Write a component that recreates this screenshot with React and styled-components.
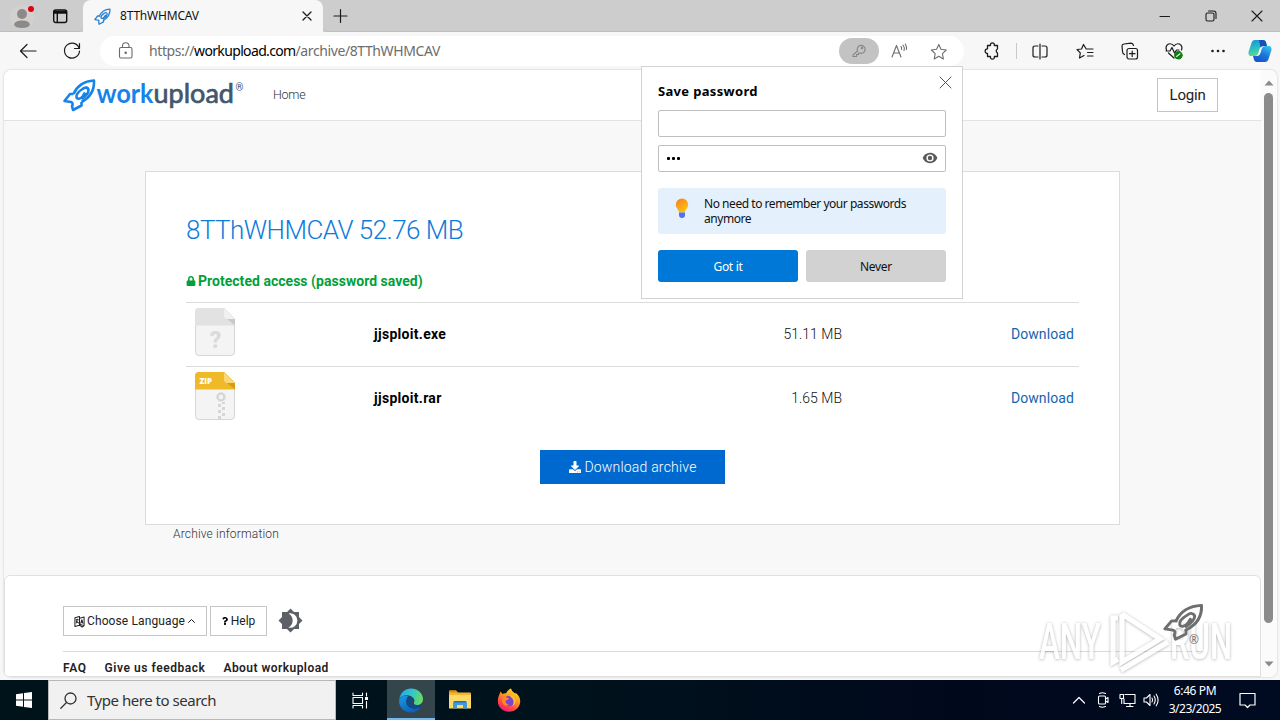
import React from "react";
import styled, { createGlobalStyle } from "styled-components";
import { FaLock, FaDownload, FaQuestion } from "react-icons/fa";

const GlobalStyle = createGlobalStyle`
  * { box-sizing: border-box; }
  html, body { margin: 0; padding: 0; }
  body { width: 1280px; height: 720px; overflow: hidden; }
  button { font: inherit; color: inherit; margin: 0; padding: 0; border: 0; background: none; }
  svg { display: block; flex: none; overflow: visible; }
`;

const ui = `"Noto Sans", "Open Sans", sans-serif`;
const web = `Roboto, "Liberation Sans", sans-serif`;

const Screen = styled.div`
  position: relative;
  display: flex;
  flex-direction: column;
  width: 1280px;
  height: 720px;
  background: #f7f7f7;
  font-family: ${ui};
  overflow: hidden;
`;

const Label = styled.span`
  font-size: ${(p) => p.$size || 12}px;
  font-weight: ${(p) => p.$weight || 400};
  letter-spacing: ${(p) => p.$track || 0}px;
  color: ${(p) => p.$color || "#111"};
  line-height: ${(p) => p.$line || "16px"};
  white-space: nowrap;
`;

/* ---------- window chrome ---------- */

const TabStrip = styled.div`
  display: flex;
  height: 32px;
  flex: none;
  background: #cdcdcd;
`;

const StripTools = styled.div`
  display: flex;
  align-items: center;
  width: 83px;
  padding: 0 0 0 10px;
  gap: 16px;
  border-bottom: 1px solid #bdbdbd;
  border-radius: 0 0 5px 0;
`;

const Tab = styled.div`
  display: flex;
  align-items: center;
  width: 240px;
  padding: 0 10px 0 11px;
  background: #f7f7f7;
  border-radius: 8px 8px 0 0;
  ${Label} { flex: 1; margin-left: 9px; }
`;

const StripRest = styled.div`
  display: flex;
  align-items: center;
  flex: 1;
  padding: 0 17px 0 10px;
  border-bottom: 1px solid #bdbdbd;
  border-radius: 0 0 0 5px;
`;

const WindowButtons = styled.div`
  display: flex;
  align-items: center;
  gap: 34px;
  margin-left: auto;
`;

const Toolbar = styled.div`
  display: flex;
  align-items: center;
  flex: none;
  height: 38px;
  padding: 0 0 0 19px;
`;

const NavButtons = styled.div`
  display: flex;
  gap: 26px;
  width: 81px;
`;

const AddressBar = styled.div`
  display: flex;
  align-items: center;
  width: 864px;
  height: 30px;
  padding: 0 16px 0 18px;
  background: #fff;
  border-radius: 15px;
`;

const Url = styled(Label)`
  flex: 1;
  margin-left: 15px;
  b { font-weight: 400; color: #000; letter-spacing: -0.65px; }
`;

const KeyPill = styled.div`
  display: flex;
  align-items: center;
  justify-content: center;
  width: 40px;
  height: 26px;
  margin-right: 12px;
  border-radius: 13px;
  background: #c3c3c3;
`;

const BarIcons = styled.div`
  display: flex;
  gap: 22px;
`;

const ToolIcons = styled.div`
  display: flex;
  align-items: center;
  padding-left: 19px;
`;

const ToolCell = styled.div`
  display: flex;
  justify-content: center;
  width: ${(p) => p.$width || 44}px;
`;

const Divider = styled.i`
  width: 1px;
  height: 16px;
  margin: 0 1px 0 15px;
  background: #c8c8c8;
`;

/* ---------- page ---------- */

const Viewport = styled.div`
  display: flex;
  flex: none;
  width: 1273px;
  height: 607px;
  margin: 0 0 0 4px;
  border-radius: 7px;
  overflow: hidden;
  background: #f8f8f8;
  box-shadow: 0 0 2px #b9b9b9;
  font-family: ${web};
`;

const Page = styled.div`
  display: flex;
  flex-direction: column;
  width: 1257px;
`;

const SiteHeader = styled.header`
  display: flex;
  align-items: center;
  height: 51px;
  flex: none;
  padding: 0 43px 0 59px;
  background: #fff;
  border-bottom: 1px solid #e3e3e3;
  ${Label} { margin-left: 29px; }
`;

const LoginButton = styled.button`
  width: 61px;
  height: 34px;
  margin-left: auto;
  border: 1px solid #c4c4c4;
  background: #fff;
  color: #222;
  font-size: 15px;
  letter-spacing: -0.2px;
`;

const Card = styled.section`
  display: flex;
  flex-direction: column;
  align-items: flex-start;
  flex: none;
  width: 975px;
  height: 354px;
  margin: 50px 0 0 141px;
  padding: 40px 40px 0;
  background: #fff;
  border: 1px solid #dcdcdc;
`;

const Title = styled.h1`
  height: 36px;
  margin: 0;
  color: #0d7bdb;
  font-size: 26px;
  font-weight: 300;
  line-height: 36px;
  letter-spacing: -0.53px;
`;

const Protected = styled.p`
  display: flex;
  align-items: center;
  gap: 2px;
  height: 20px;
  margin: 23px 0 11px;
  color: #00a13a;
  font-size: 14px;
  font-weight: 700;
  letter-spacing: 0.03px;
`;

const FileRow = styled.div`
  display: grid;
  grid-template-columns: 188px 330px 138px 1fr;
  align-items: center;
  width: 893px;
  height: 64px;
  padding: 0 5px 1px 0;
  border-top: 1px solid #dcdcdc;
  > svg { margin: 0 0 5px 8px; }
  > :nth-child(n + 3) { justify-self: end; }
`;

const ArchiveButton = styled.button`
  display: flex;
  align-items: center;
  justify-content: center;
  gap: 3px;
  width: 185px;
  height: 34px;
  margin: 20px 0 0 354px;
  padding-left: 1px;
  background: #0069cf;
  color: #fff;
`;

const ArchiveInfo = styled.div`
  display: flex;
  height: 50px;
  flex: none;
  padding: 1px 0 0 169px;
`;

const Footer = styled.footer`
  display: flex;
  flex-direction: column;
  flex: 1;
  padding: 30px 58px 0;
  background: #fff;
  border: 1px solid #e0e0e0;
  border-radius: 6px 6px 0 0;
`;

const FooterTools = styled.div`
  display: flex;
  height: 46px;
  border-bottom: 1px solid #dadada;
  > svg { margin: 2px 0 0 8px; }
`;

const SmallButton = styled.button`
  display: flex;
  align-items: center;
  justify-content: center;
  gap: 2px;
  width: ${(p) => p.$width}px;
  height: 30px;
  margin-right: 3px;
  padding-right: 1px;
  border: 1px solid #c6c6c6;
  background: #fff;
`;

const FooterLinks = styled.nav`
  display: flex;
  gap: 18px;
  padding-top: 8px;
`;

const ScrollTrack = styled.div`
  display: flex;
  flex-direction: column;
  align-items: center;
  width: 16px;
  padding: 10px 1px 10px 0;
  background: #fbfbfb;
`;

const Thumb = styled.i`
  width: 9px;
  height: 530px;
  margin: 7px 0 auto;
  border-radius: 5px;
  background: #8b8b8b;
`;

/* ---------- overlays ---------- */

const Popup = styled.aside`
  position: absolute;
  left: 641px;
  top: 66px;
  display: flex;
  flex-direction: column;
  width: 322px;
  height: 233px;
  padding: 0 16px;
  background: #fff;
  border: 1px solid #d2d2d2;
`;

const PopupHead = styled.div`
  display: flex;
  align-items: flex-start;
  justify-content: space-between;
  height: 43px;
  margin-right: -6px;
  padding-top: 9px;
  ${Label} { margin-top: 6px; }
`;

const Field = styled.div`
  display: flex;
  align-items: center;
  justify-content: space-between;
  height: 27px;
  margin-bottom: 8px;
  padding: 0 7px 1px;
  border: 1px solid #bebebe;
  border-radius: 2px;
`;

const Dots = styled.span`
  display: flex;
  gap: 2px;
  padding-left: 1px;
  i { width: 3px; height: 3px; border-radius: 1px; background: #000; }
`;

const Tip = styled.div`
  display: flex;
  height: 46px;
  margin: 8px 0 16px;
  padding: 8px 16px;
  gap: 14px;
  border-radius: 3px;
  background: #e4f0fb;
`;

const ButtonPair = styled.div`
  display: flex;
  gap: 8px;
`;

const Choice = styled.button`
  flex: 1;
  height: 32px;
  padding-bottom: 2px;
  border-radius: 3px;
  background: ${(p) => (p.$primary ? "#0078d7" : "#d2d2d2")};
`;

const WatermarkLayer = styled.div`
  position: absolute;
  left: 1032px;
  top: 602px;
`;

const FooterRocket = styled.div`
  position: absolute;
  left: 1163px;
  top: 603px;
  ${Label} { position: absolute; left: 26px; top: 29px; }
`;

/* ---------- taskbar ---------- */

const Taskbar = styled.div`
  display: flex;
  align-items: stretch;
  height: 40px;
  margin-top: auto;
  background: linear-gradient(90deg, #00131b 0%, #00121c 45%, #00091c 75%, #000b22 100%);
`;

const TaskItem = styled.div`
  display: flex;
  align-items: center;
  justify-content: center;
  width: ${(p) => p.$width || 49}px;
  background: ${(p) => (p.$active ? "#34454c" : "transparent")};
  border-bottom: ${(p) => (p.$active ? "2px solid #76b9ed" : "0")};
  padding-top: ${(p) => (p.$active ? 2 : 0)}px;
`;

const SearchBox = styled.div`
  display: flex;
  align-items: center;
  gap: 10px;
  width: 288px;
  padding-left: 11px;
  background: #f1f1f1;
  border: 1px solid #b9b9b9;
`;

const Tray = styled.div`
  display: flex;
  align-items: center;
  margin-left: auto;
  padding-right: 24px;
`;

const TrayCell = styled.div`
  display: flex;
  justify-content: center;
  width: 24px;
`;

const Clock = styled.div`
  display: flex;
  flex-direction: column;
  align-items: center;
  width: 60px;
  margin: 0 14px 0 2px;
`;

/* ---------- drawings ---------- */

const Line = ({ w = 16, h = 16, box, color = "#1c1c1c", sw = 1.2, children }) => (
  <svg width={w} height={h} viewBox={box || `0 0 ${w} ${h}`} fill="none" stroke={color}
    strokeWidth={sw} strokeLinecap="round" strokeLinejoin="round">
    {children}
  </svg>
);

const RocketPaths = () => (
  <>
    <path d="M10.500 15.500C14 7.500 21 2.500 31 2C31.500 12 27 19 18.500 23.500" />
    <path d="M10.500 15.500H7L1.500 22.500L8 23.500C10 24 10 26 9 27.500L10 31.500L18.500 27V23.500" />
    <path d="M18.500 20.500C22.500 18 25.500 14 25.500 11.500C25 8.500 22 8.500 19.500 10.500C15.500 13 13 16.500 13.500 19C14.500 21.500 18 20 20 17.500L22 14" />
  </>
);

const Rocket = ({ w, h, color, sw }) => (
  <svg width={w} height={h} viewBox="0 0 33 33" preserveAspectRatio="none" fill="none"
    stroke={color} strokeWidth={sw} strokeLinejoin="round" strokeLinecap="round">
    <RocketPaths />
  </svg>
);

const Logo = () => (
  <svg width="181" height="34" viewBox="0 0 181 34">
    <g fill="none" stroke="#1583e9" strokeWidth="2.600" strokeLinejoin="round" transform="translate(0 0.500)">
      <RocketPaths />
    </g>
    <text x="33.500" y="24.500" fontFamily="Lato" fontSize="26" fontWeight="700" fill="#1583e9" textLength="57" lengthAdjust="spacingAndGlyphs">work</text>
    <text x="90.500" y="24.500" fontFamily="Lato" fontSize="26" fontWeight="400" fill="#44566c" stroke="#44566c" strokeWidth="0.700" textLength="80.500" lengthAdjust="spacingAndGlyphs">upload</text>
    <text x="172.500" y="13" fontFamily="Roboto" fontSize="10" fill="#44566c">®</text>
  </svg>
);

const FileIcon = ({ zip }) => (
  <svg width="42" height="50" viewBox="0 0 42 50">
    <path d="M5 1.500H30L40.500 12V45Q40.500 48.500 37 48.500H5Q1.500 48.500 1.500 45V5Q1.500 1.500 5 1.500Z" fill="#f4f4f4" stroke="#d6d6d6" />
    <path d="M5 1H30L41 12V18.500H1V5Q1 1 5 1Z" fill={zip ? "#f0b928" : "#e2e2e2"} />
    <path d="M30 1V9Q30 12 33 12L41 18.500V12Z" fill={zip ? "#d39d16" : "#c9c9c9"} />
    <path d="M30 1L41 12H33Q30 12 30 9Z" fill={zip ? "#f8d878" : "#f0f0f0"} />
    {zip ? (
      <>
        <text x="5.500" y="12.500" fontFamily="Open Sans" fontSize="8" fontWeight="800" fill="#fff" textLength="12.500" lengthAdjust="spacingAndGlyphs">ZIP</text>
        <circle cx="27" cy="26" r="3.500" fill="none" stroke="#d6d6d6" strokeWidth="2.500" />
        <path d="M24 33h3v3h-3zM28 36h3v3h-3zM24 39h3v3h-3zM28 42h3v3h-3zM24 45h3v3h-3zM28 31h3v2h-3z" fill="#d6d6d6" />
      </>
    ) : (
      <text x="21.500" y="41" textAnchor="middle" fontFamily="Roboto" fontSize="23" fontWeight="800" fill="#dadada">?</text>
    )}
  </svg>
);

const Copilot = () => (
  <svg width="24" height="24" viewBox="0 0 24 24">
    <defs>
      <linearGradient id="cpa" x1="0" y1="0" x2="0.300" y2="1">
        <stop offset="0" stopColor="#1b8fd8" /><stop offset="0.550" stopColor="#29bfc4" /><stop offset="1" stopColor="#5fd88c" />
      </linearGradient>
      <linearGradient id="cpb" x1="0.800" y1="0" x2="0.200" y2="1">
        <stop offset="0" stopColor="#35c2f0" /><stop offset="0.500" stopColor="#1b74d8" /><stop offset="1" stopColor="#1a4fd0" />
      </linearGradient>
    </defs>
    <path d="M7 1H15Q17.500 1 18.200 4L19 7H15Q12.500 7 11.500 10L10 15Q9.200 17 7 17H3Q0 17 0.500 13L3.500 4Q4.300 1 7 1Z" fill="url(#cpa)" />
    <path d="M11 1H15Q17.500 1 18.200 4L19 7H15Q13.500 7 12.500 8.500Z" fill="#1750b8" />
    <path d="M17 23H9Q6.500 23 5.800 20L5 17H9Q11.500 17 12.500 14L14 9Q14.800 7 17 7H21Q24 7 23.500 11L20.500 20Q19.700 23 17 23Z" fill="url(#cpb)" />
  </svg>
);

const EdgeLogo = () => (
  <svg width="25" height="25" viewBox="0.500 0 25 25">
    <defs>
      <linearGradient id="edt" x1="0" y1="0.300" x2="1" y2="0.500">
        <stop offset="0" stopColor="#2aa5e6" /><stop offset="0.500" stopColor="#2fc6cf" /><stop offset="1" stopColor="#6bdc5a" />
      </linearGradient>
      <linearGradient id="edb" x1="0" y1="0" x2="0.600" y2="1">
        <stop offset="0" stopColor="#1b9be2" /><stop offset="1" stopColor="#0c5dbb" />
      </linearGradient>
    </defs>
    <path d="M0.800 11C2 4 7 0.500 12.500 0.500C20 0.500 24.500 6 24.500 11C24.500 15 21.500 17 18.500 17C15.500 17 14.500 15.800 15.500 14.500C17 12 15 8.500 10.500 7.500C6 6.800 2.500 8 0.800 11Z" fill="url(#edt)" />
    <path d="M0.600 12C2 8.500 6 7 9.800 8.200C8 10 7 14 9 17.500C11 20.500 17 22 22.600 19C20.500 22.500 17 24.500 12.500 24.500C5 24.500 0 18.500 0.600 12Z" fill="url(#edb)" />
    <path d="M9.800 8.200C13.500 8.500 16.500 12 15.300 14.700C14.500 16 16 17.200 18.700 17.200C20.500 17.200 21.500 16.500 22.600 15.900C23.500 16 23.300 18 22.600 19C17 22 11 20.500 9 17.500C7 14 8 10 9.800 8.200Z" fill="#114a8b" />
    <path d="M12.500 10.500C14.500 10.800 16.200 12.700 15.300 14.700C14.500 16 16 17.200 18.700 17.200C20.500 17.200 21.500 16.500 22.600 15.900C21 18.500 17 18.500 14.500 16.500C12.500 15 12 12.500 12.500 10.500Z" fill="#34454c" />
  </svg>
);

const FolderLogo = () => (
  <svg width="22" height="20" viewBox="0 0 22 20">
    <path d="M0 1.500Q0 0.500 1 0.500H7L9 2.500H21Q22 2.500 22 3.500V18H0Z" fill="#f5b52c" />
    <path d="M0 1.500Q0 0.500 1 0.500H7L8.500 2.500H0Z" fill="#e08b16" />
    <path d="M0 5H22V18.500H0Z" fill="#ffd968" />
    <path d="M4 18.500V13Q4 11 6 11H16Q18 11 18 13V18.500H14V15H8V18.500Z" fill="#3f9bdc" />
    <path d="M4.500 12.500Q5 11 6 11H16Q17 11 17.500 12.500Z" fill="#2373b8" />
  </svg>
);

const FirefoxLogo = () => (
  <svg width="24" height="24" viewBox="0 0 24 24">
    <defs>
      <linearGradient id="ffa" x1="0.800" y1="0" x2="0.250" y2="1">
        <stop offset="0" stopColor="#ffe226" /><stop offset="0.400" stopColor="#ff9a20" /><stop offset="0.750" stopColor="#ff4248" /><stop offset="1" stopColor="#f0127b" />
      </linearGradient>
    </defs>
    <path d="M3.500 3.500L5.500 6Q7 5 9 5.200Q10.500 2 14 0.500Q14.500 3 17.500 5L19.500 5.500Q23.500 9 23.200 14C22.500 20 18 23.700 12 23.700C5.500 23.700 0.800 19 0.800 13C0.800 9 2.500 6.500 3.500 3.500Z" fill="url(#ffa)" />
    <circle cx="12" cy="13" r="5.200" fill="#7a45d4" />
    <path d="M5.500 9.500Q8 8 12 10.500Q11 12.500 8.500 12.500Q8.500 16 12 17Q8 19 6 16Q4.500 13 5.500 9.500Z" fill="#ff8a28" />
    <path d="M12.500 7Q17 7 18.500 11.500Q19 16 15.500 18Q18 13 15 10Q13.500 9.500 12.500 7Z" fill="#ffc02e" />
  </svg>
);

const Bulb = () => (
  <svg width="16" height="24" viewBox="0 0 16 24">
    <defs>
      <linearGradient id="blb" x1="0" y1="0" x2="0.600" y2="1">
        <stop offset="0" stopColor="#f47c22" /><stop offset="1" stopColor="#ffc40f" />
      </linearGradient>
    </defs>
    <path d="M8 2.500A6.200 6.200 0 0 1 14.200 8.700C14.200 12 11.500 13 11 16.500H5C4.500 13 1.800 12 1.800 8.700A6.200 6.200 0 0 1 8 2.500Z" fill="url(#blb)" />
    <path d="M5 16.500H11V19Q11 22 8 22Q5 22 5 19Z" fill="#5470ee" />
  </svg>
);

const ThemeIcon = () => (
  <svg width="25" height="25" viewBox="0 0 25 25">
    <path d="M12.500 0.500L16 4H21V9L24.500 12.500L21 16V21H16L12.500 24.500L9 21H4V16L0.500 12.500L4 9V4H9Z" fill="#5d6167" />
    <path d="M10.500 5.500A7.200 7.200 0 1 1 10.500 19.500A8 8 0 0 0 10.500 5.500Z" fill="#fff" />
  </svg>
);

const LanguageIcon = () => (
  <Line w={11} h={13} box="0 0 12 13" sw={1.1} color="#222">
    <path d="M1 2.500L6 1V10.500L1 12ZM6 3L11 1.500V11L6 9.500M6 10.500L9 12.500L11 11" />
    <path d="M2.200 4.500H4.700M3.500 4L2.500 8M3 6.500L4.800 8M7.300 8.500L8.600 4.500L9.800 8.500M7.800 7.300H9.500" />
  </Line>
);

const Watermark = () => (
  <svg width="208" height="74" viewBox="0 0 208 74" fontFamily="Roboto" fontSize="50" fontWeight="500">
    <defs>
      <filter id="halo" x="-10%" y="-10%" width="120%" height="120%">
        <feDropShadow dx="0" dy="0.500" stdDeviation="1.800" floodColor="#777" floodOpacity="0.800" />
      </filter>
    </defs>
    <g fill="#fff" filter="url(#halo)" opacity="0.750">
      <text x="7" y="57" textLength="62" lengthAdjust="spacingAndGlyphs">ANY</text>
      <text x="138" y="57" textLength="62" lengthAdjust="spacingAndGlyphs">RUN</text>
      <path d="M86 16H81V60L86 57M90 12V60L128 37L90 12M89 68L136 40" fill="none" stroke="#fff" strokeWidth="5" />
    </g>
  </svg>
);

const files = [
  { name: "jjsploit.exe", size: "51.11 MB", zip: false },
  { name: "jjsploit.rar", size: "1.65 MB", zip: true },
];

const links = [
  { text: "FAQ", track: 0.4 },
  { text: "Give us feedback", track: 0.35 },
  { text: "About workupload", track: 0.25 },
];

export default function App() {
  return (
    <Screen>
      <GlobalStyle />
      <TabStrip>
        <StripTools>
          <svg width="26" height="28" viewBox="0 0 26 28">
            <circle cx="12" cy="15" r="12" fill="#d3d0ce" />
            <circle cx="12" cy="12" r="5" fill="#8c8a89" />
            <path d="M4 22.500Q5 18.500 12 18.500T20 22.500Q19 26 12 26T4 22.500Z" fill="#8c8a89" />
            <circle cx="21" cy="7" r="3" fill="#e00012" />
          </svg>
          <Line sw={1.4} color="#111">
            <rect x="1.700" y="2" width="13" height="12.500" rx="2" />
            <path d="M2 3.500H14.500M2 5H14.500M5.300 5V14" />
          </Line>
        </StripTools>
        <Tab>
          <Rocket w={17} h={17} color="#2b83d6" sw={2.5} />
          <Label $track={-0.2}>8TThWHMCAV</Label>
          <Line w={12} h={12} sw={1.3}><path d="M2 2L10 10M10 2L2 10" /></Line>
        </Tab>
        <StripRest>
          <Line sw={1.2}><path d="M7.500 1.500V14.500M1 8H14" /></Line>
          <WindowButtons>
            <Line w={12} h={12} sw={1.1}><path d="M1 6.500H10.500" /></Line>
            <Line w={12} h={12} sw={1.1}>
              <rect x="1" y="3" width="8" height="8" rx="1.500" />
              <path d="M3.500 1H8.500Q11 1 11 3.500V8.500" />
            </Line>
            <Line w={12} h={12} sw={1.1}><path d="M1 1L11 11M11 1L1 11" /></Line>
          </WindowButtons>
        </StripRest>
      </TabStrip>

      <Toolbar>
        <NavButtons>
          <Line w={18} h={18} sw={1.2}><path d="M17 9H1.500M8 2.500L1.500 9L8 15.500" /></Line>
          <Line w={18} h={18} sw={1.2}><path d="M16.200 6.500A7.500 7.500 0 1 0 16.500 9M16.500 1.500V6.500H11.500" /></Line>
        </NavButtons>
        <AddressBar>
          <Line w={16} h={18} color="#6b6b6b" sw={1.1}>
            <rect x="1.500" y="5.500" width="12.500" height="10.500" rx="1.500" />
            <path d="M4.500 5.500V4A3.200 3.200 0 0 1 11 4V5.500" />
            <circle cx="7.700" cy="10.700" r="0.700" fill="#6b6b6b" />
          </Line>
          <Url $size={14} $track={-0.4} $color="#6d6d6d">
            https://<b>workupload.com</b>/archive/8TThWHMCAV
          </Url>
          <KeyPill>
            <Line w={16} h={16} color="#858585" sw={1.1}>
              <path d="M6.500 8A4 4 0 1 1 8.500 10H7.500V11.500H5.500V13.500H2V11.800Z" />
              <circle cx="11" cy="5" r="0.700" />
            </Line>
          </KeyPill>
          <BarIcons>
            <Line w={17} h={16} color="#6d6d6d" sw={1.1}>
              <path d="M1 14L5.500 2.500L10 14M2.500 10H8.500M10 3.500Q11 4.500 10.500 6.500M12 2Q14 4.500 13 7.500M14.300 1Q16 4 15.500 6.500" />
            </Line>
            <Line w={18} h={17} color="#6d6d6d" sw={1.1}>
              <path transform="translate(0.800)" d="M8 1.500L10.200 6.300L15.500 7L11.600 10.600L12.600 16L8 13.300L3.400 16L4.400 10.600L0.500 7L5.800 6.300Z" />
            </Line>
          </BarIcons>
        </AddressBar>
        <ToolIcons>
          <Line w={18} h={18} sw={1.3}>
            <path d="M4.500 3.500H7.500A2 2 0 1 1 11.300 3.500H14.500V7A2.200 2.200 0 0 0 14.500 11V14.500H11.300A2 2 0 1 1 7.500 14.500H4.500V11.500A2.300 2.300 0 1 1 4.500 6.800Z" />
          </Line>
          <Divider />
          <ToolCell>
            <Line w={16} h={17}><path d="M6 3H3Q1 3 1 5V12Q1 14 3 14H6M10 3H13Q15 3 15 5V12Q15 14 13 14H10M8 1V16" /></Line>
          </ToolCell>
          <ToolCell $width={46}>
            <Line w={18} h={17}><path d="M11.500 6H10.200L7.500 1.500L5.500 6L1 6.500L4.300 9.800L3.500 15L8 12.500M11.500 6H17M11.500 9.500H17M11.500 13H17" /></Line>
          </ToolCell>
          <ToolCell>
            <Line w={18} h={18}>
              <rect x="6" y="6.500" width="10.500" height="10.500" rx="2" />
              <path d="M11.200 9V14.500M8.500 11.700H14M3.500 12.500Q1.500 11.500 1.500 9.500L1 4Q1 2.300 3 2L10 1.200Q12 1.200 12.500 3.500" />
            </Line>
          </ToolCell>
          <ToolCell>
            <Line w={18} h={18}>
              <path d="M1.500 8Q0 4 3.500 2Q7 1 9 4Q11 1 14.500 2Q18 4 16.500 8M3.500 11L9 16M1 9H5L7 5.500L9.500 11L11.500 8H14" />
              <circle cx="13.300" cy="13.200" r="3.800" fill="#107c10" stroke="#107c10" strokeWidth="1" />
              <path d="M11.600 14.500L15 11.800" stroke="#d5f0d5" />
            </Line>
          </ToolCell>
          <ToolCell $width={43}>
            <svg width="16" height="16" fill="#1c1c1c"><circle cx="2.500" cy="8" r="1.300" /><circle cx="8" cy="8" r="1.300" /><circle cx="13.500" cy="8" r="1.300" /></svg>
          </ToolCell>
          <ToolCell $width={41}><Copilot /></ToolCell>
        </ToolIcons>
      </Toolbar>

      <Viewport>
        <Page>
          <SiteHeader>
            <Logo />
            <Label $size={12.5} $weight={300} $color="#333" $track={-0.25}>Home</Label>
            <LoginButton>Login</LoginButton>
          </SiteHeader>
          <Card>
            <Title>8TThWHMCAV 52.76 MB</Title>
            <Protected><FaLock size={10} />Protected access (password saved)</Protected>
            {files.map((f) => (
              <FileRow key={f.name}>
                <FileIcon zip={f.zip} />
                <Label $size={14} $weight={700} $color="#000" $track={0.3}>{f.name}</Label>
                <Label $size={14} $weight={300}>{f.size}</Label>
                <Label $size={14} $color="#1563ae" $track={0.1}>Download</Label>
              </FileRow>
            ))}
            <ArchiveButton>
              <FaDownload size={12} />
              <Label $size={14} $color="#fff" $weight={300} $track={0.2}>Download archive</Label>
            </ArchiveButton>
          </Card>
          <ArchiveInfo>
            <Label $size={12} $weight={300} $color="#333" $track={0.17}>Archive information</Label>
          </ArchiveInfo>
          <Footer>
            <FooterTools>
              <SmallButton $width={144}>
                <LanguageIcon />
                <Label $color="#222" $track={0.12}>Choose Language</Label>
                <Line w={8} h={8} sw={1}><path d="M1.500 5.500L4.500 2.500L7.500 5.500" /></Line>
              </SmallButton>
              <SmallButton $width={57}>
                <FaQuestion size={8} />
                <Label $color="#222">Help</Label>
              </SmallButton>
              <ThemeIcon />
            </FooterTools>
            <FooterLinks>
              {links.map((l) => (
                <Label key={l.text} $weight={600} $color="#222" $track={l.track + 0.2}>{l.text}</Label>
              ))}
            </FooterLinks>
          </Footer>
        </Page>
        <ScrollTrack>
          <svg width="10" height="6"><path d="M0.500 5.500L5 0.500L9.500 5.500Z" fill="#8b8b8b" /></svg>
          <Thumb />
          <svg width="10" height="6"><path d="M0.500 0.500L5 5.500L9.500 0.500Z" fill="#8b8b8b" /></svg>
        </ScrollTrack>
      </Viewport>

      <Taskbar>
        <TaskItem $width={48}>
          <svg width="16" height="16" fill="#fff"><path d="M0 2.300L7 1.300V7.500H0ZM8 1.100L16 0V7.500H8ZM0 8.500H7V14.700L0 13.700ZM8 8.500H16V16L8 14.900Z" /></svg>
        </TaskItem>
        <SearchBox>
          <Line w={17} h={17} color="#333" sw={1.3}><circle cx="10.500" cy="6.500" r="5.500" /><path d="M6.500 10.500L0.800 16.200" /></Line>
          <Label $size={15} $color="#333" $track={-0.47} $line="20px">Type here to search</Label>
        </SearchBox>
        <TaskItem $width={51}>
          <Line w={20} h={17} color="#fff" sw={1.1}>
            <path d="M1 1V3.500H10.500V1M1 5.500H10.500V11.500H1ZM1 16V13.500H10.500V16M14.500 1V4M14.500 9.500V16" />
            <rect x="13.500" y="5.500" width="2" height="2" fill="#fff" />
          </Line>
        </TaskItem>
        <TaskItem $width={48} $active><EdgeLogo /></TaskItem>
        <TaskItem><FolderLogo /></TaskItem>
        <TaskItem><FirefoxLogo /></TaskItem>
        <Tray>
          <TrayCell>
            <Line w={14} h={14} color="#fff"><path d="M1.500 10L7 4.500L12.500 10" /></Line>
          </TrayCell>
          <TrayCell>
            <Line w={14} h={16} color="#fff" sw={1.1}><rect x="2.500" y="4" width="7" height="8" rx="1" /><path d="M9.500 7L12 5.500V10.500L9.500 9M3.500 1.500Q6 0 9.500 1.500M3.500 14.500Q6 16 9.500 14.500" /></Line>
          </TrayCell>
          <TrayCell>
            <Line w={17} h={16} color="#fff" sw={1.1}><path d="M6 2.500H16V11.500H5V7M11 11.500V14.500M7.500 14.500H14M1 2.500H4.500V6.500H1ZM2.700 6.500V11.500" /></Line>
          </TrayCell>
          <TrayCell>
            <Line w={17} h={16} color="#fff" sw={1.1}><path d="M1 6H3.500L7 2.500V13.500L3.500 10H1ZM9 6Q10.300 8 9 10M11 4Q13.500 8 11 12M13.200 2.200Q17 8 13.200 13.800" /></Line>
          </TrayCell>
          <Clock>
            <Label $color="#fff" $track={-0.4} $line="18px">6:46 PM</Label>
            <Label $color="#fff" $track={-0.5} $line="18px">3/23/2025</Label>
          </Clock>
          <Line w={17} h={17} color="#fff"><path d="M1 1.500H16V13H11L8.500 15.500L6 13H1Z" /></Line>
        </Tray>
      </Taskbar>

      <WatermarkLayer><Watermark /></WatermarkLayer>
      <FooterRocket>
        <Rocket w={41} h={38} color="#6e6e6e" sw={2.4} />
        <Label $size={12} $color="#777">®</Label>
      </FooterRocket>

      <Popup>
        <PopupHead>
          <Label $size={13} $weight={700} $color="#000" $line="18px" $track={0.33}>Save password</Label>
          <Line w={13} h={13} color="#555" sw={1}><path d="M1 1L12 12M12 1L1 12" /></Line>
        </PopupHead>
        <Field />
        <Field>
          <Dots><i /><i /><i /></Dots>
          <svg width="16" height="12" viewBox="0 0 16 12">
            <path d="M8 0.800C4.500 0.800 1.800 3 0.700 6C1.800 9 4.500 11.200 8 11.200S14.200 9 15.300 6C14.200 3 11.500 0.800 8 0.800Z" fill="#5a5a5a" />
            <circle cx="8" cy="6" r="3.600" fill="#fff" /><circle cx="8" cy="6" r="2.200" fill="#5a5a5a" />
          </svg>
        </Field>
        <Tip>
          <Bulb />
          <Label $line="15px" $track={-0.46}>No need to remember your passwords<br />anymore</Label>
        </Tip>
        <ButtonPair>
          <Choice $primary><Label $color="#fff" $track={-0.3}>Got it</Label></Choice>
          <Choice><Label $track={-0.3}>Never</Label></Choice>
        </ButtonPair>
      </Popup>
    </Screen>
  );
}
